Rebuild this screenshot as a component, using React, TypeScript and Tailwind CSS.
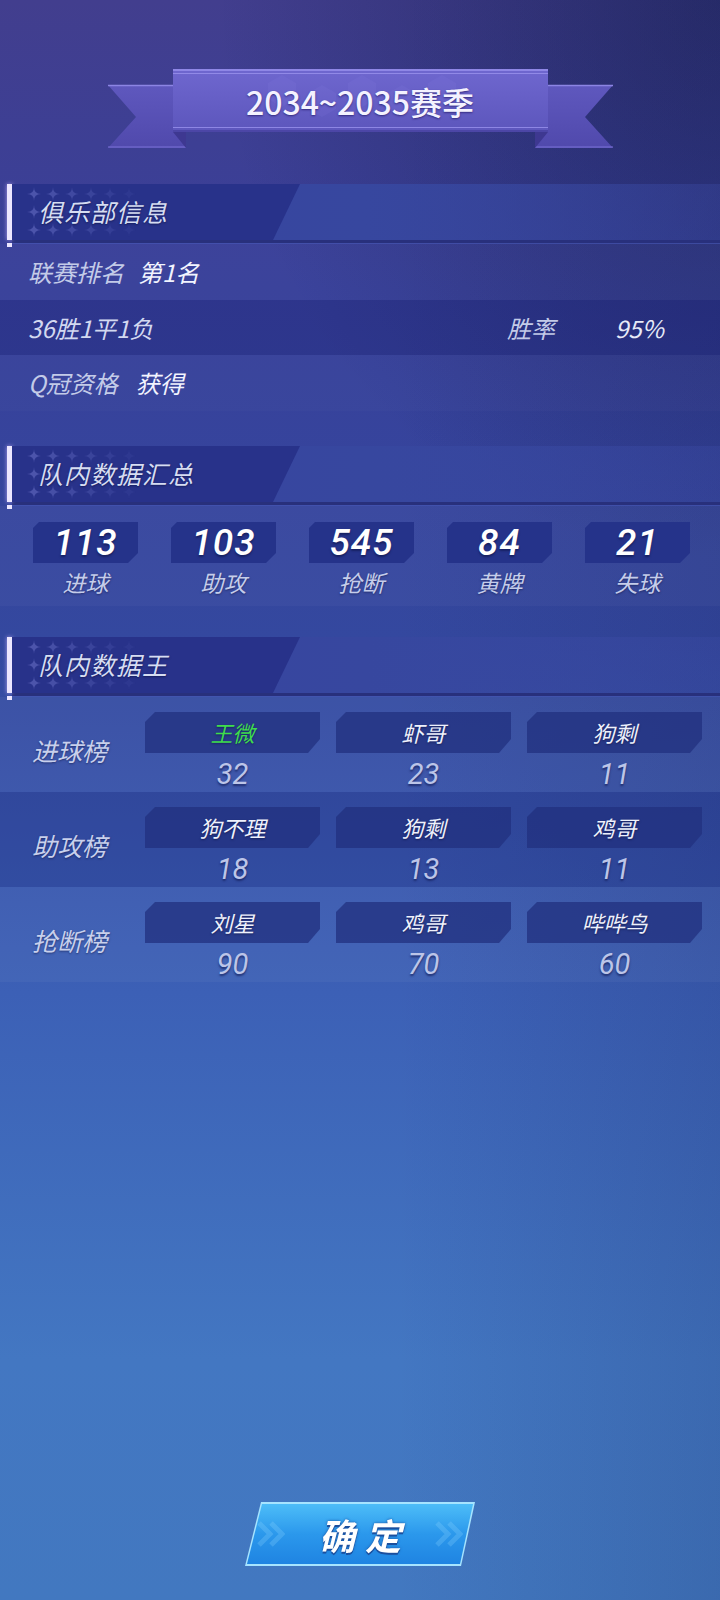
import React from "react";

const clubRows = [
  { kind: "rank" },
  { kind: "record" },
  { kind: "qual" },
];

const teamStats = [
  { value: "113", label: "进球" },
  { value: "103", label: "助攻" },
  { value: "545", label: "抢断" },
  { value: "84", label: "黄牌" },
  { value: "21", label: "失球" },
];

const boards = [
  {
    title: "进球榜",
    players: [
      { name: "王微", num: "32", me: true },
      { name: "虾哥", num: "23" },
      { name: "狗剩", num: "11" },
    ],
  },
  {
    title: "助攻榜",
    players: [
      { name: "狗不理", num: "18" },
      { name: "狗剩", num: "13" },
      { name: "鸡哥", num: "11" },
    ],
  },
  {
    title: "抢断榜",
    players: [
      { name: "刘星", num: "90" },
      { name: "鸡哥", num: "70" },
      { name: "哔哔鸟", num: "60" },
    ],
  },
];

// little 4-point stars behind the section titles
function Sparkles() {
  const xs = [22, 41, 60, 79, 98, 117];
  const ys = [10, 28, 46];
  const star = (cx: number, cy: number, r: number) =>
    `M${cx},${cy - r} Q${cx},${cy} ${cx + r},${cy} Q${cx},${cy} ${cx},${cy + r} Q${cx},${cy} ${cx - r},${cy} Q${cx},${cy} ${cx},${cy - r} Z`;
  return (
    <svg width="130" height="56" className="absolute left-0 top-0">
      {ys.map((y, ri) =>
        xs.map((x, ci) => (
          <path
            key={`${ri}-${ci}`}
            d={star(x, y, 7)}
            fill="#6f76cc"
            opacity={Math.max(0.1, 0.5 - ci * 0.08 - (ri === 1 && ci > 0 ? 0.16 : 0))}
          />
        ))
      )}
    </svg>
  );
}

function SectionHeader({ title }: { title: string }) {
  return (
    <div className="relative">
      <div className="flex h-[56px]">
        <div className="w-[5px] ml-[7px] bg-[#ece6ff] shadow-[0_0_4px_rgba(200,180,255,0.8)]" />
        <div className="flex-1 flex bg-[linear-gradient(90deg,#37449f_0%,#37479f_50%,rgba(60,75,165,0.35)_100%)]">
          <div className="relative w-[288px] h-full bg-[#28328a] [clip-path:polygon(0_0,100%_0,calc(100%_-_27px)_100%,0_100%)] flex items-center pl-[26px]">
            <Sparkles />
            <span className="relative italic text-[25px] text-[#d6ddf2] tracking-[1px] [text-shadow:0_1px_2px_rgba(10,15,60,0.6)]">
              {title}
            </span>
          </div>
        </div>
      </div>
      <div className="h-[3px] ml-[12px] bg-[#28307c]" />
      <div className="h-[1px] ml-[12px] bg-[#4a5ab8]/60" />
      <div className="absolute left-[7px] top-[59px] w-[5px] h-[4px] bg-[#ece6ff]" />
    </div>
  );
}

function Banner() {
  return (
    <div className="relative w-[505px] h-[80px] mx-auto">
      <svg width="505" height="80" className="absolute left-0 top-0">
        <defs>
          <linearGradient id="boxg" x1="0" y1="0" x2="0" y2="1">
            <stop offset="0" stopColor="#6f67cf" />
            <stop offset="1" stopColor="#5c56bc" />
          </linearGradient>
          <linearGradient id="tailg" x1="0" y1="0" x2="0" y2="1">
            <stop offset="0" stopColor="#5f58be" />
            <stop offset="1" stopColor="#5049ac" />
          </linearGradient>
        </defs>
        {/* tails */}
        <polygon points="0,16 78,16 78,79 0,79 28,48" fill="url(#tailg)" />
        <line x1="0" y1="16.5" x2="65" y2="16.5" stroke="#8c85e4" strokeWidth="1.5" />
        <line x1="0" y1="78" x2="78" y2="78" stroke="#7a73d6" strokeWidth="1" />
        <polygon points="65,63 78,63 78,79" fill="#3e3891" />
        <polygon points="505,16 427,16 427,79 505,79 477,48" fill="url(#tailg)" />
        <line x1="440" y1="16.5" x2="505" y2="16.5" stroke="#8c85e4" strokeWidth="1.5" />
        <line x1="427" y1="78" x2="505" y2="78" stroke="#7a73d6" strokeWidth="1" />
        <polygon points="440,63 427,63 427,79" fill="#3e3891" />
        {/* center plate */}
        <rect x="65" y="0" width="375" height="63" fill="url(#boxg)" />
        <rect x="65" y="0" width="375" height="2" fill="#8f87e6" />
        <line x1="65" y1="4.5" x2="440" y2="4.5" stroke="#9a92ee" strokeWidth="1" opacity="0.8" />
        <line x1="65" y1="58.5" x2="440" y2="58.5" stroke="#9a92ee" strokeWidth="1" opacity="0.8" />
        <rect x="65" y="61" width="375" height="2" fill="#4c46a6" />
        {[160, 200, 240, 280, 320].map((x, i) => (
          <polygon
            key={x}
            points={`${x},${14 + (i % 2) * 10} ${x + 14},${6 + (i % 2) * 10} ${x + 28},${14 + (i % 2) * 10} ${x + 28},${30 + (i % 2) * 10} ${x + 14},${38 + (i % 2) * 10} ${x},${30 + (i % 2) * 10}`}
            fill="#8a82e4"
            opacity="0.12"
          />
        ))}
      </svg>
      <div className="relative h-[63px] flex items-center justify-center">
        <span className="text-[32px] text-[#f4f2ff] font-medium [text-shadow:0_1px_2px_rgba(40,30,110,0.8)]">
          2034~2035赛季
        </span>
      </div>
    </div>
  );
}

function ClubInfo() {
  return (
    <div className="text-[24px] italic">
      {clubRows.map((r) => (
        <div
          key={r.kind}
          className={
            r.kind === "record"
              ? "h-[55px] flex items-center pl-[28px] pr-[20px] bg-[#1d2372]/35"
              : "h-[56px] flex items-center pl-[28px] pr-[20px] bg-white/[0.02]"
          }
        >
          {r.kind === "rank" && (
            <>
              <span className="text-[#c3cbe8]">联赛排名</span>
              <span className="ml-[14px] text-[#f2f4ff]">第1名</span>
            </>
          )}
          {r.kind === "record" && (
            <>
              <span className="text-[#d2d8f0]">36胜1平1负</span>
              <div className="flex-1" />
              <span className="w-[108px] text-[#c3cbe8]">胜率</span>
              <span className="w-[85px] text-[#e6eaf8]">95%</span>
            </>
          )}
          {r.kind === "qual" && (
            <>
              <span className="text-[#c3cbe8]">Q冠资格</span>
              <span className="ml-[18px] text-[#f2f4ff]">获得</span>
            </>
          )}
        </div>
      ))}
    </div>
  );
}

function TeamTotals() {
  return (
    <div className="h-[100px] flex gap-[33px] pl-[33px] pt-[16px] bg-white/[0.03]">
      {teamStats.map((s) => (
        <div key={s.label} className="w-[105px] flex flex-col items-center">
          <div className="w-full h-[41px] bg-[#25338a] [clip-path:polygon(6px_0,100%_0,100%_calc(100%_-_10px),calc(100%_-_10px)_100%,0_100%,0_6px)] flex items-center justify-center">
            <span className="font-['Roboto','Noto_Sans_CJK_SC',sans-serif] italic font-medium text-[37px] leading-none text-white tracking-[1px] [text-shadow:0_2px_2px_rgba(10,15,60,0.5)]">
              {s.value}
            </span>
          </div>
          <span className="mt-[4px] italic text-[23px] leading-[30px] text-[#c5cdea] [text-shadow:0_1px_2px_rgba(10,15,60,0.5)]">
            {s.label}
          </span>
        </div>
      ))}
    </div>
  );
}

function Leaderboards() {
  return (
    <div>
      {boards.map((b, i) => (
        <div
          key={b.title}
          className={
            i === 1
              ? "h-[95px] flex pl-[32px] bg-[#1d2676]/25"
              : "h-[95px] flex pl-[32px] bg-white/[0.04]"
          }
        >
          <div className="w-[113px] pt-[38px]">
            <span className="italic text-[25px] leading-[30px] text-[#c8d0ec] [text-shadow:0_1px_2px_rgba(10,15,60,0.5)]">
              {b.title}
            </span>
          </div>
          <div className="flex gap-[16px] pt-[15px]">
            {b.players.map((p) => (
              <div key={p.name} className="w-[175px] flex flex-col items-center">
                <div className="w-full h-[41px] bg-[#22307f]/75 [clip-path:polygon(10px_0,100%_0,100%_calc(100%_-_14px),calc(100%_-_12px)_100%,0_100%,0_10px)] flex items-center justify-center">
                  <span
                    className={
                      p.me
                        ? "italic text-[22px] text-[#3fdc4c] [text-shadow:0_1px_2px_rgba(10,15,60,0.5)]"
                        : "italic text-[22px] text-[#eef1fc] [text-shadow:0_1px_2px_rgba(10,15,60,0.6)]"
                    }
                  >
                    {p.name}
                  </span>
                </div>
                <span className="mt-[5px] font-['Roboto','Noto_Sans_CJK_SC',sans-serif] italic font-normal text-[29px] leading-[32px] text-[#bcc5e8] [text-shadow:0_2px_2px_rgba(20,30,90,0.7)]">
                  {p.num}
                </span>
              </div>
            ))}
          </div>
        </div>
      ))}
    </div>
  );
}

function Chevrons() {
  return (
    <svg width="28" height="26" viewBox="0 0 28 26">
      <polyline points="2,2 13,13 2,24" fill="none" stroke="#8fd6ff" strokeWidth="5" opacity="0.25" />
      <polyline points="14,2 25,13 14,24" fill="none" stroke="#8fd6ff" strokeWidth="5" opacity="0.25" />
    </svg>
  );
}

function ConfirmButton() {
  return (
    <div className="mx-auto w-[230px] h-[64px] p-[2px] bg-[#a6e4ff] [clip-path:polygon(16px_0,100%_0,calc(100%_-_14px)_100%,0_100%)] drop-shadow-[0_0_6px_rgba(80,190,255,0.6)]">
      <div className="w-full h-full bg-[linear-gradient(180deg,#4dbdf8_0%,#2b98ec_50%,#1f84e2_100%)] [clip-path:polygon(15px_0,100%_0,calc(100%_-_13px)_100%,0_100%)] flex items-center justify-center">
        <Chevrons />
        <span className="mx-[24px] italic font-bold text-[36px] leading-none text-white tracking-[10px] pl-[10px] [text-shadow:0_2px_0_#1b4f9e,0_0_3px_#1b4f9e]">
          确定
        </span>
        <Chevrons />
      </div>
    </div>
  );
}

export default function App() {
  return (
    <div className="relative w-[720px] h-[1600px] overflow-hidden bg-[linear-gradient(180deg,#423e8e_0%,#38409a_18%,#34489f_40%,#3c60b6_62%,#4377c2_85%,#4278c0_100%)] font-['Noto_Sans_CJK_SC','Noto_Sans',sans-serif]">
      {/* darker corner glow, top right */}
      <div className="absolute inset-0 bg-[radial-gradient(ellipse_70%_35%_at_100%_0%,rgba(18,28,75,0.5),transparent)]" />
      <div className="absolute inset-0 bg-[linear-gradient(90deg,transparent_55%,rgba(20,30,85,0.16)_100%)]" />

      <div className="relative h-full flex flex-col pt-[69px] pb-[34px]">
        <Banner />

        <div className="mt-[35px]">
          <SectionHeader title="俱乐部信息" />
          <ClubInfo />
        </div>

        <div className="mt-[35px]">
          <SectionHeader title="队内数据汇总" />
          <TeamTotals />
        </div>

        <div className="mt-[31px]">
          <SectionHeader title="队内数据王" />
          <Leaderboards />
        </div>

        <div className="flex-1" />
        <ConfirmButton />
      </div>
    </div>
  );
}
